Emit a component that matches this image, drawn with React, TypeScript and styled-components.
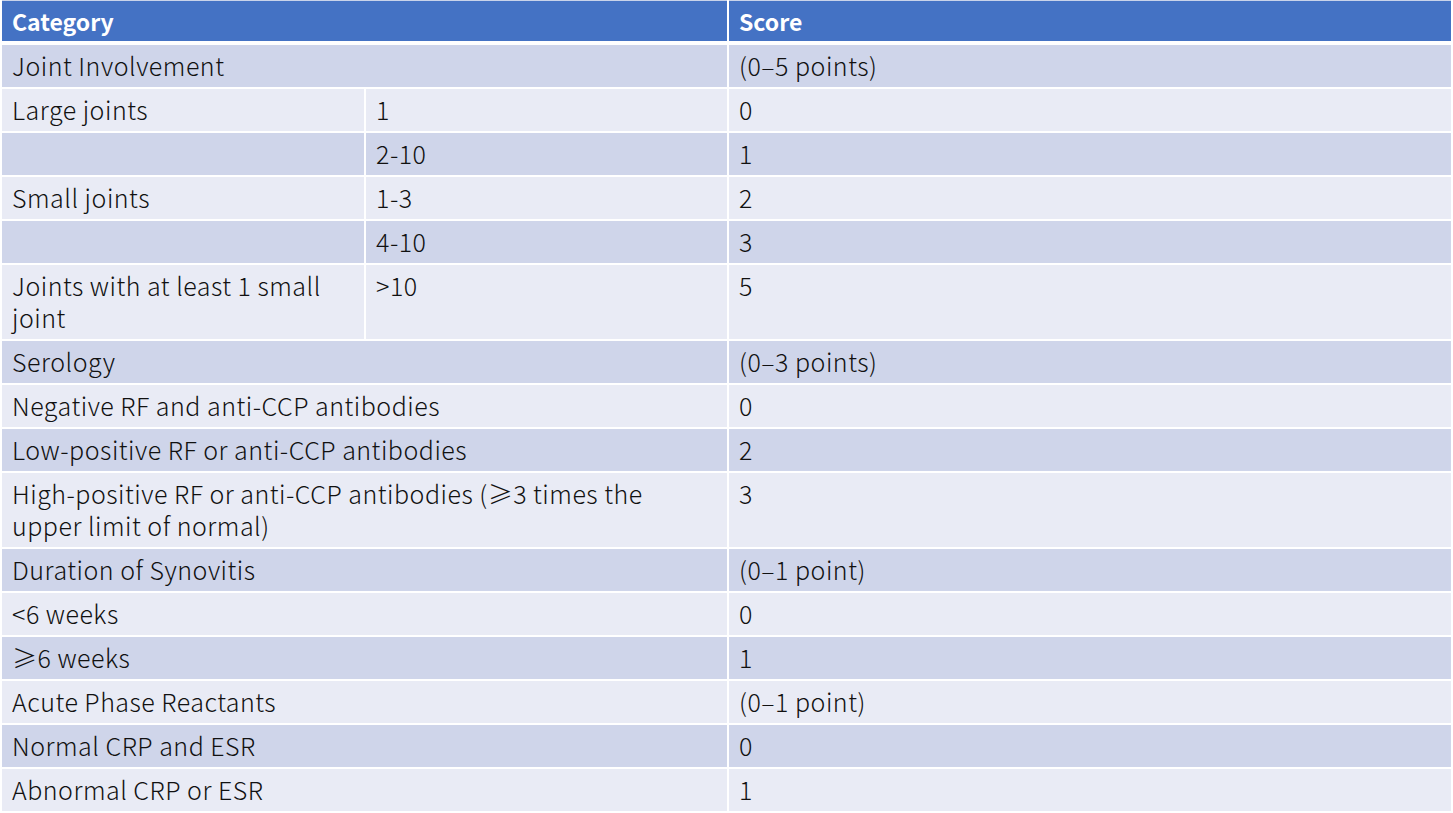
import React from "react";
import styled, { createGlobalStyle } from "styled-components";

const Global = createGlobalStyle`
  html, body { margin: 0; padding: 0; background: #ffffff; }
  body { font-family: "Noto Sans CJK SC", "Noto Sans", sans-serif; }
`;

const Page = styled.div`
  width: 1453px;
  height: 813px;
  overflow: hidden;
  background: #e6e6e6;
`;

const Table = styled.table`
  width: 1453px;
  border-collapse: collapse;
  table-layout: fixed;
  margin: 0;
  background: #ffffff;
`;

const HeadCell = styled.th`
  background: #4472c4;
  color: #ffffff;
  font-weight: 700;
  font-size: 23px;
  text-align: left;
  height: 40px;
  padding: 0 10px;
  border: 2px solid #ffffff;
  border-top: 1px solid #c9d3ea;
  border-bottom: 4px solid #ffffff;
  line-height: 40px;
`;

const Row = styled.tr<{ $odd: boolean }>`
  background: ${(p) => (p.$odd ? "#cfd5ea" : "#e9ebf5")};
`;

const Cell = styled.td`
  font-size: 25px;
  font-weight: 300;
  color: #111111;
  line-height: 32px;
  letter-spacing: 0.5px;
  padding: 4px 10px 6px;
  border: 2px solid #ffffff;
  vertical-align: top;
  text-align: left;
`;

type R = { a: string; b?: string; span?: boolean; s: string };

const rows: R[] = [
  { a: "Joint Involvement", span: true, s: "(0–5 points)" },
  { a: "Large joints", b: "1", s: "0" },
  { a: "", b: "2-10", s: "1" },
  { a: "Small joints", b: "1-3", s: "2" },
  { a: "", b: "4-10", s: "3" },
  { a: "Joints with at least 1 small joint", b: ">10", s: "5" },
  { a: "Serology", span: true, s: "(0–3 points)" },
  { a: "Negative RF and anti-CCP antibodies", span: true, s: "0" },
  { a: "Low-positive RF or anti-CCP antibodies", span: true, s: "2" },
  {
    a: "High-positive RF or anti-CCP antibodies (≥3 times the upper limit of normal)",
    span: true,
    s: "3",
  },
  { a: "Duration of Synovitis", span: true, s: "(0–1 point)" },
  { a: "<6 weeks", span: true, s: "0" },
  { a: "≥6 weeks", span: true, s: "1" },
  { a: "Acute Phase Reactants", span: true, s: "(0–1 point)" },
  { a: "Normal CRP and ESR", span: true, s: "0" },
  { a: "Abnormal CRP or ESR", span: true, s: "1" },
];

export default function App() {
  return (
    <Page>
      <Global />
      <Table>
        <colgroup>
          <col style={{ width: 364 }} />
          <col style={{ width: 363 }} />
          <col />
        </colgroup>
        <thead>
          <tr>
            <HeadCell colSpan={2}>Category</HeadCell>
            <HeadCell>Score</HeadCell>
          </tr>
        </thead>
        <tbody>
          {rows.map((r, i) => (
            <Row key={i} $odd={i % 2 === 0}>
              {r.span ? (
                <Cell colSpan={2}>{r.a}</Cell>
              ) : (
                <>
                  <Cell>{r.a}</Cell>
                  <Cell>{r.b}</Cell>
                </>
              )}
              <Cell>{r.s}</Cell>
            </Row>
          ))}
        </tbody>
      </Table>
    </Page>
  );
}
